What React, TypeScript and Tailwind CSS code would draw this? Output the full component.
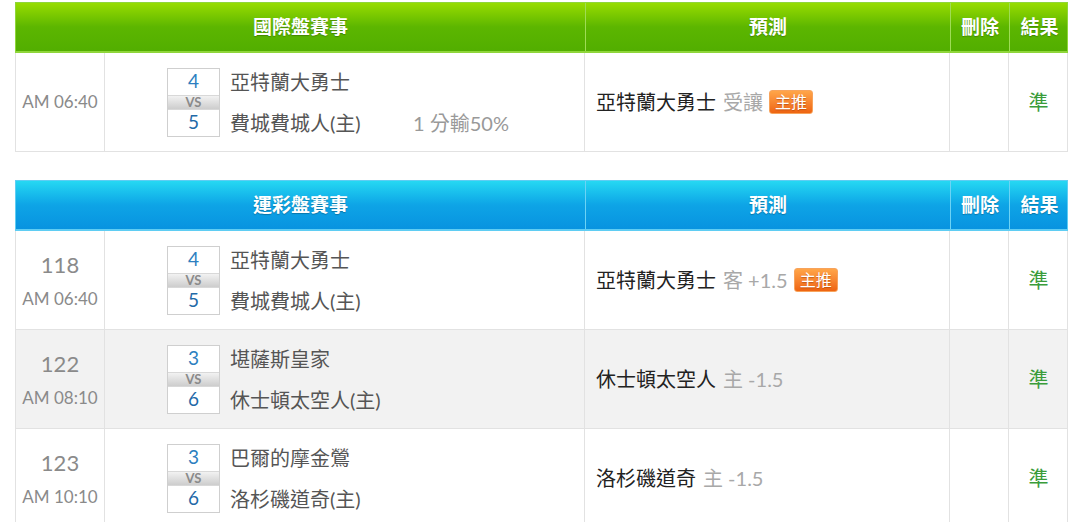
import React from 'react';

type Match = {
  no?: string;
  time: string;
  home: string;
  away: string;
  sHome: number;
  sAway: number;
  handicap?: string;
  pick: string;
  note: string;
  badge?: boolean;
  result: string;
};

const intl: Match[] = [
  {
    time: 'AM 06:40',
    home: '亞特蘭大勇士',
    away: '費城費城人(主)',
    sHome: 4,
    sAway: 5,
    handicap: '1 分輸50%',
    pick: '亞特蘭大勇士',
    note: '受讓',
    badge: true,
    result: '準',
  },
];

const lottery: Match[] = [
  {
    no: '118',
    time: 'AM 06:40',
    home: '亞特蘭大勇士',
    away: '費城費城人(主)',
    sHome: 4,
    sAway: 5,
    pick: '亞特蘭大勇士',
    note: '客 +1.5',
    badge: true,
    result: '準',
  },
  {
    no: '122',
    time: 'AM 08:10',
    home: '堪薩斯皇家',
    away: '休士頓太空人(主)',
    sHome: 3,
    sAway: 6,
    pick: '休士頓太空人',
    note: '主 -1.5',
    result: '準',
  },
  {
    no: '123',
    time: 'AM 10:10',
    home: '巴爾的摩金鶯',
    away: '洛杉磯道奇(主)',
    sHome: 3,
    sAway: 6,
    pick: '洛杉磯道奇',
    note: '主 -1.5',
    result: '準',
  },
];

const font = { fontFamily: 'Lato, "Noto Sans CJK TC", sans-serif' };

const Header: React.FC<{ title: string; tone: 'green' | 'blue' }> = ({ title, tone }) => {
  const bg =
    tone === 'green'
      ? 'bg-gradient-to-b from-[#97dc00] via-[#5cb600] to-[#52ae00] border-[#8fd63a]'
      : 'bg-gradient-to-b from-[#26d8f2] via-[#0ea4e6] to-[#0893e0] border-[#5fcdf3]';
  const line = tone === 'green' ? 'border-[#9fdc55]' : 'border-[#6cd3f5]';
  return (
    <div
      className={`grid grid-cols-[569px_365px_59px_60px] h-[51px] border border-b-2 text-white font-bold text-[19px] [text-shadow:0_1px_1px_rgba(0,0,0,0.25)] ${bg}`}
    >
      <div className="flex items-center justify-center">{title}</div>
      <div className={`flex items-center justify-center border-l ${line}`}>預測</div>
      <div className={`flex items-center justify-center border-l ${line}`}>刪除</div>
      <div className={`flex items-center justify-center border-l ${line}`}>結果</div>
    </div>
  );
};

const ScoreBox: React.FC<{ a: number; b: number }> = ({ a, b }) => (
  <div className="w-[53px] flex flex-col border border-[#cfcfcf] bg-white">
    <div className="h-[26px] flex items-center justify-center text-[19px] text-[#2d7fc0]">{a}</div>
    <div className="h-[15px] flex items-center justify-center bg-gradient-to-b from-[#f2f2f2] to-[#cdcdcd] border-y border-[#d8d8d8] text-[13px] font-bold text-[#8a8a8a] leading-none">
      VS
    </div>
    <div className="h-[26px] flex items-center justify-center text-[19px] text-[#1f6aa8]">{b}</div>
  </div>
);

const Row: React.FC<{ m: Match; shaded?: boolean }> = ({ m, shaded }) => (
  <div
    className={`grid grid-cols-[88px_480px_365px_59px_60px] h-[99px] border-x border-b border-[#e2e2e2] ${
      shaded ? 'bg-[#f2f2f2]' : 'bg-white'
    }`}
  >
    <div className={`flex flex-col items-center justify-center text-[#8a8a8a] ${m.no ? 'pt-[4px]' : ''}`}>
      {m.no && <div className="text-[22px] leading-[30px]">{m.no}</div>}
      <div className={`text-[17px] leading-[30px] ${m.no ? 'mt-[4px]' : ''}`}>{m.time}</div>
    </div>
    <div className="flex items-center pl-[62px] border-l border-[#e2e2e2]">
      <ScoreBox a={m.sHome} b={m.sAway} />
      <div className="ml-[10px] w-[183px] h-[69px] flex flex-col justify-between text-[20px] text-[#555]">
        <div className="leading-[28px]">{m.home}</div>
        <div className="leading-[28px]">{m.away}</div>
      </div>
      {m.handicap && (
        <div className="h-[69px] flex items-end text-[20px] text-[#999]">
          <div className="leading-[28px]">{m.handicap}</div>
        </div>
      )}
    </div>
    <div className="flex items-center pl-[11px] border-l border-[#e2e2e2] text-[20px]">
      <span className="text-[#222]">{m.pick}</span>
      <span className="ml-[7px] text-[#a8a8a8]">{m.note}</span>
      {m.badge && (
        <span className="ml-[6px] h-[24px] px-[5px] flex items-center rounded-[3px] border border-[#f7a35c] bg-gradient-to-b from-[#ffa548] to-[#ee6410] text-white text-[16px] leading-none [text-shadow:0_1px_1px_rgba(150,50,0,0.5)]">
          主推
        </span>
      )}
    </div>
    <div className="border-l border-[#e2e2e2]" />
    <div className="flex items-center justify-center border-l border-[#e2e2e2] text-[20px] text-[#3a9c3a]">
      {m.result}
    </div>
  </div>
);

const App: React.FC = () => {
  return (
    <div className="min-h-screen bg-white pt-[2px] px-[15px]" style={font}>
      <div className="w-[1053px]">
        {/* 國際盤 */}
        <Header title="國際盤賽事" tone="green" />
        {intl.map((m, i) => (
          <Row key={i} m={m} />
        ))}

        {/* 運彩盤 */}
        <div className="mt-[28px]">
          <Header title="運彩盤賽事" tone="blue" />
          {lottery.map((m, i) => (
            <Row key={i} m={m} shaded={i % 2 === 1} />
          ))}
        </div>
      </div>
    </div>
  );
};

export default App;
